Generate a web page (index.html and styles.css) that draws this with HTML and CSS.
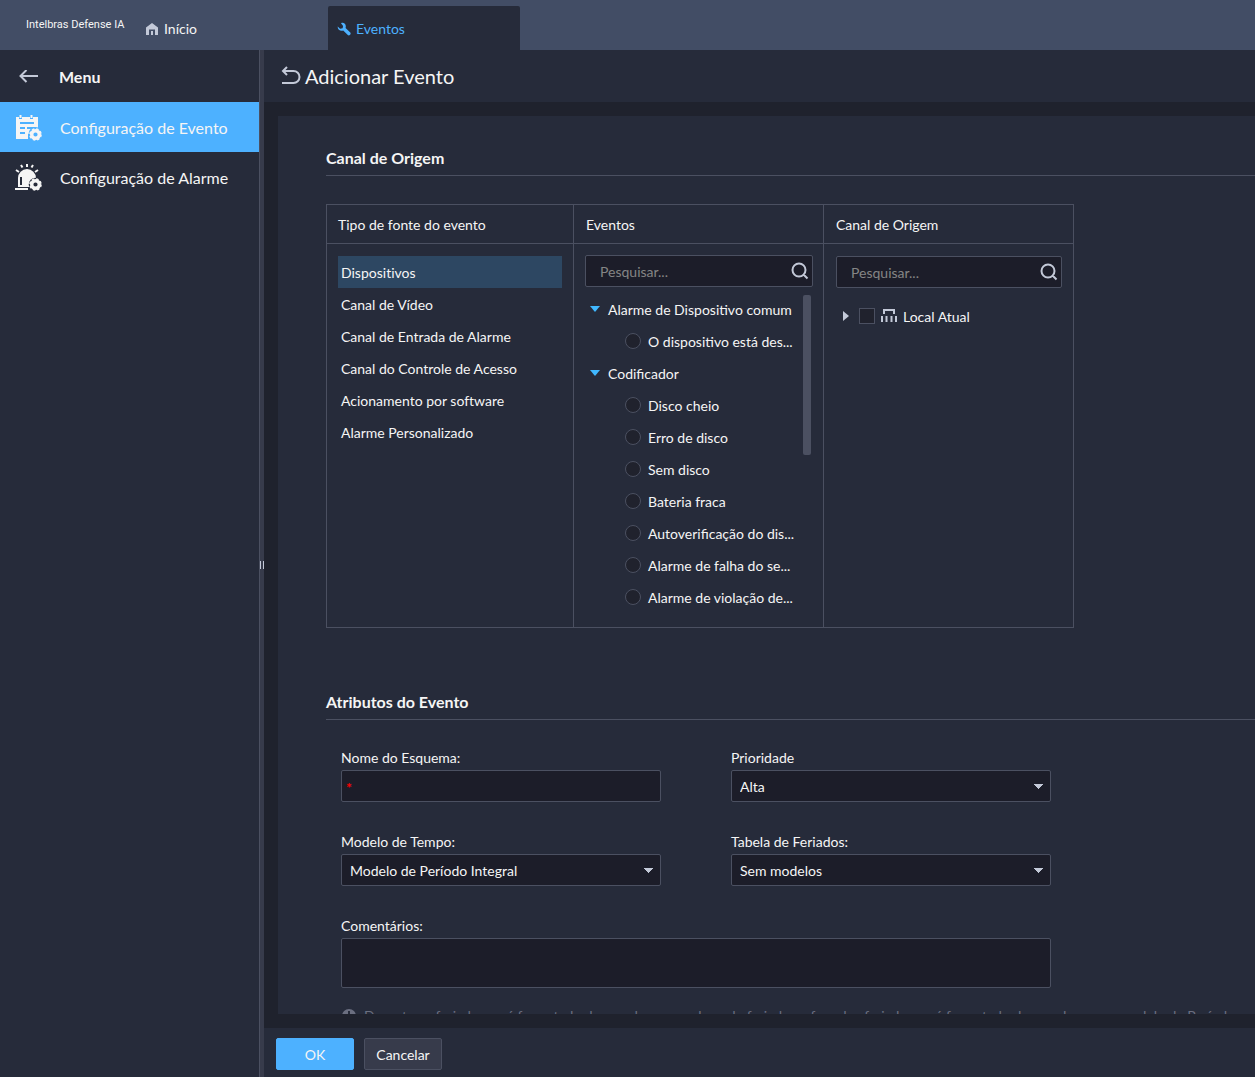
FILE: index.html
```
<!DOCTYPE html>
<html lang="pt-BR">

<head>
  <meta charset="UTF-8">
  <title>Intelbras Defense IA</title>
  <link rel="stylesheet" href="styles.css">
</head>

<body>
  <header class="topbar">
    <div class="brand">Intelbras Defense IA</div>
    <a class="tab" href="#inicio">
      <svg width="14" height="14" viewBox="0 0 14 14"><path fill="#c3c9d8" d="M7 1 13 5.500V13h-3V7.500H4V13H1V5.500zM6 9h2v4H6z"/></svg>
      Início
    </a>
    <a class="tab active" href="#eventos">
      <svg width="14" height="14" viewBox="0 0 14 14"><path fill="#4db1ff" d="M4 1.200C6-.2 9 1.500 8.800 4.500c0 .6-.1 1-.2 1.500l4.700 4.600c1.200 1.500-1 3.600-2.500 2.500L6.200 8.500C3.300 9.500.5 7.500.7 4.600l2.400 2.100 2.500-.4.500-2.400z"/></svg>
      Eventos
    </a>
  </header>

  <div class="wrap">
    <nav class="sidebar">
      <div class="menu_head">
        <button class="icon_btn" type="button" aria-label="Voltar">
          <svg width="20" height="14" viewBox="0 0 20 14"><path fill="none" stroke="#c3c9d8" stroke-width="2" d="M19 6H2M7.500 0 1.500 6l6 6"/></svg>
        </button>
        <span>Menu</span>
      </div>
      <a class="menu_item selected" href="#evento">
        <svg width="28" height="28" viewBox="0 0 28 28">
          <path fill="#f5f5f5" d="M1 3h3v2h3V3h8v2h3V3h5v22H1z"/>
          <path stroke="#f5f5f5" stroke-width="2" d="M5.500 1v3M16.500 1v3"/>
          <path stroke="#4db1ff" stroke-width="2" fill="none" d="M5 9h14M5 14h5M12 14h8M5 19h5"/>
          <circle cx="20.500" cy="20" r="7" fill="#4db1ff"/>
          <path fill="#4db1ff" d="M13 20h14v8H13z"/>
          <circle cx="20.500" cy="20.500" r="3.800" fill="none" stroke="#f5f5f5" stroke-width="3.400"/>
          <circle cx="20.500" cy="20.500" r="5.300" fill="none" stroke="#f5f5f5" stroke-width="2" stroke-dasharray="2.400 1.760"/>
        </svg>
        <span>Configuração de Evento</span>
      </a>
      <a class="menu_item" href="#alarme">
        <svg width="28" height="28" viewBox="0 0 28 28">
          <path fill="#f5f5f5" d="M3 23V14a9 9 0 0 1 18 0v1l-7 8zM0 24h13v2H0z"/>
          <path stroke="#262b3a" stroke-width="2" d="M6 13v8"/>
          <path stroke="#f5f5f5" stroke-width="2" d="M12 0v3M6 1l1.500 2.500M18 1l-1.500 2.500M1 6l3 2M23 6l-3 2"/>
          <circle cx="20.500" cy="20.500" r="6.800" fill="#262b3a"/>
          <circle cx="20.500" cy="20.500" r="3.800" fill="none" stroke="#f5f5f5" stroke-width="3.400"/>
          <circle cx="20.500" cy="20.500" r="5.300" fill="none" stroke="#f5f5f5" stroke-width="2" stroke-dasharray="2.400 1.760"/>
        </svg>
        <span>Configuração de Alarme</span>
      </a>
    </nav>
    <div class="splitter"><i></i></div>

    <main class="content">
      <div class="page_title">
        <button class="icon_btn" type="button" aria-label="Retornar">
          <svg width="20" height="20" viewBox="0 0 20 20"><path fill="none" stroke="#c3c9d8" stroke-width="2" d="M2 5h10.500a6 6 0 0 1 0 12H1M6 1 2 5l4 4"/></svg>
        </button>
        <h1>Adicionar Evento</h1>
      </div>

      <div class="panel_area">
        <div class="panel">
          <h2 class="section_title">Canal de Origem</h2>
          <div class="picker">
            <section class="picker_col source">
              <h3>Tipo de fonte do evento</h3>
              <ul class="type_list">
                <li class="selected">Dispositivos</li>
                <li>Canal de Vídeo</li>
                <li>Canal de Entrada de Alarme</li>
                <li>Canal do Controle de Acesso</li>
                <li>Acionamento por software</li>
                <li>Alarme Personalizado</li>
              </ul>
            </section>
            <section class="picker_col events">
              <h3>Eventos</h3>
              <div class="search">
                <input type="text" placeholder="Pesquisar..." aria-label="Pesquisar eventos">
                <svg width="18" height="18" viewBox="0 0 18 18"><path fill="none" stroke="#c3c9d8" stroke-width="2" d="M14.500 8a6.500 6.500 0 1 1-13 0 6.500 6.500 0 0 1 13 0zM12.500 12.500l4 4"/></svg>
              </div>
              <div class="event_scroll">
                <div class="tree">
                  <div class="tree_group"><i class="arrow_down"></i>Alarme de Dispositivo comum</div>
                  <label class="tree_item"><input type="radio" name="event">O dispositivo está des...</label>
                  <div class="tree_group"><i class="arrow_down"></i>Codificador</div>
                  <label class="tree_item"><input type="radio" name="event">Disco cheio</label>
                  <label class="tree_item"><input type="radio" name="event">Erro de disco</label>
                  <label class="tree_item"><input type="radio" name="event">Sem disco</label>
                  <label class="tree_item"><input type="radio" name="event">Bateria fraca</label>
                  <label class="tree_item"><input type="radio" name="event">Autoverificação do dis...</label>
                  <label class="tree_item"><input type="radio" name="event">Alarme de falha do se...</label>
                  <label class="tree_item"><input type="radio" name="event">Alarme de violação de...</label>
                </div>
                <div class="scroll_thumb"></div>
              </div>
            </section>
            <section class="picker_col channel">
              <h3>Canal de Origem</h3>
              <div class="search">
                <input type="text" placeholder="Pesquisar..." aria-label="Pesquisar canais">
                <svg width="18" height="18" viewBox="0 0 18 18"><path fill="none" stroke="#c3c9d8" stroke-width="2" d="M14.500 8a6.500 6.500 0 1 1-13 0 6.500 6.500 0 0 1 13 0zM12.500 12.500l4 4"/></svg>
              </div>
              <label class="site">
                <i class="arrow_right"></i>
                <input type="checkbox">
                <svg width="16" height="14" viewBox="0 0 16 14"><path fill="none" stroke="#c3c9d8" stroke-width="2" d="M3 5V1h10v4M1 7v6M5.500 7v6M10.500 7v6M15 7v6"/></svg>
                <span>Local Atual</span>
              </label>
            </section>
          </div>

          <h2 class="section_title">Atributos do Evento</h2>
          <form class="attributes">
            <div class="field">
              <label for="scheme">Nome do Esquema:</label>
              <input id="scheme" class="required" type="text" placeholder="*">
            </div>
            <div class="field">
              <label for="priority">Prioridade</label>
              <select id="priority"><option>Alta</option></select>
            </div>
            <div class="field">
              <label for="time_model">Modelo de Tempo:</label>
              <select id="time_model"><option>Modelo de Período Integral</option></select>
            </div>
            <div class="field">
              <label for="holidays">Tabela de Feriados:</label>
              <select id="holidays"><option>Sem modelos</option></select>
            </div>
            <div class="field wide">
              <label for="comments">Comentários:</label>
              <textarea id="comments"></textarea>
            </div>
          </form>
          <p class="hint">
            <svg width="14" height="14" viewBox="0 0 14 14"><circle cx="7" cy="7" r="7" fill="#6b6f80"/><path stroke="#262b3a" stroke-width="2" d="M7 2v6M7 9.500v2"/></svg>
            Durante os feriados será formatado de acordo com o plano de feriados e fora dos feriados será formatado de acordo com o modelo de Período
          </p>
        </div>
      </div>

      <footer class="actions">
        <button class="btn primary" type="button">OK</button>
        <button class="btn" type="button">Cancelar</button>
      </footer>
    </main>
  </div>
</body>

</html>
```
FILE: styles.css
```
* {
  box-sizing: border-box;
}

body {
  display: flex;
  flex-direction: column;
  height: 100vh;
  margin: 0;
  overflow: hidden;
  background: #262b3a;
  color: #f5f5f5;
  font: 14px/18px Lato, "Liberation Sans", sans-serif;
}

h1,
h2,
h3,
ul,
p {
  margin: 0;
  padding: 0;
}

a {
  color: inherit;
  text-decoration: none;
}

svg {
  display: block;
  flex: none;
}

input,
select,
textarea,
button {
  margin: 0;
  color: inherit;
  font: inherit;
}

/* top bar */
.topbar {
  display: flex;
  align-items: flex-end;
  flex: none;
  height: 50px;
  background: #424d65;
}

.brand {
  width: 136px;
  padding-left: 26px;
  font: 11px/50px Roboto, sans-serif;
  white-space: nowrap;
}

.tab {
  display: flex;
  align-items: center;
  gap: 5px;
  width: 192px;
  height: 44px;
  padding: 2px 9px 0;
  border-radius: 2px 2px 0 0;
}

.tab.active {
  background: #262b3a;
  color: #4db1ff;
}

/* side menu */
.wrap {
  display: flex;
  flex: 1;
  min-height: 0;
}

.sidebar {
  flex: none;
  width: 260px;
  border-right: 1px solid #4b5061;
  font-size: 16px;
}

.menu_head {
  display: flex;
  align-items: center;
  gap: 20px;
  height: 52px;
  padding: 2px 19px 0;
  font-weight: bold;
}

.icon_btn {
  padding: 0;
  border: 0;
  background: none;
  cursor: pointer;
}

.menu_item {
  display: flex;
  align-items: center;
  gap: 17px;
  height: 50px;
  padding: 2px 15px 0;
}

.menu_item.selected {
  background: #4db1ff;
}

.splitter {
  display: flex;
  align-items: center;
  flex: none;
  width: 4px;
  padding-top: 2px;
  background: #373b4b;
}

.splitter i {
  width: 4px;
  height: 8px;
  border: solid #c3c9d8;
  border-width: 0 1px;
}

/* content */
.content {
  display: flex;
  flex: 1;
  flex-direction: column;
  min-width: 0;
}

.page_title {
  display: flex;
  align-items: center;
  flex: none;
  gap: 4px;
  height: 52px;
  padding: 0 17px;
}

.page_title h1 {
  font-size: 20px;
  font-weight: normal;
  line-height: 24px;
}

.panel_area {
  display: flex;
  flex: 1;
  min-height: 0;
  padding: 14px 0 14px 14px;
  background: #1f222d;
}

.panel {
  flex: 1;
  min-width: 0;
  padding: 32px 0 0 48px;
  overflow: hidden;
  background: #262b3a;
}

.section_title {
  height: 28px;
  border-bottom: 1px solid #4b5061;
  font-size: 16px;
  line-height: 20px;
}

.picker {
  display: grid;
  grid-template-columns: 246fr 250fr 250fr;
  max-width: 748px;
  height: 424px;
  margin: 28px 0 64px;
  border: 1px solid #4b5061;
}

.picker_col {
  min-width: 0;
}

.picker_col + .picker_col {
  border-left: 1px solid #4b5061;
}

.picker_col h3 {
  height: 39px;
  padding: 0 12px;
  border-bottom: 1px solid #4b5061;
  font-size: 14px;
  font-weight: normal;
  line-height: 40px;
}

.picker_col.source h3 {
  padding: 0 11px;
}

.type_list {
  padding: 12px 11px;
  list-style: none;
  line-height: 34px;
  font-variant-ligatures: none;
}

.type_list li {
  height: 32px;
  padding: 0 3px;
}

.type_list .selected {
  background: #2d4762;
}

.search {
  position: relative;
  margin: 12px 11px 0 12px;
}

.events .search {
  margin: 11px 10px 0 11px;
}

.search input {
  width: 100%;
  height: 32px;
  padding: 0 34px 0 14px;
  border: 1px solid #4b5061;
  border-radius: 2px;
  background: #1c1d29;
}

.search input::placeholder {
  color: #858585;
}

.search svg {
  position: absolute;
  top: 7px;
  right: 4px;
}

/* event tree */
.event_scroll {
  position: relative;
  margin-top: 7px;
}

.tree {
  padding-top: 1px;
}

.tree_group,
.tree_item {
  display: flex;
  align-items: center;
  height: 32px;
  padding-bottom: 2px;
  white-space: nowrap;
}

.tree_group {
  gap: 8px;
  padding-left: 16px;
}

.tree_item {
  gap: 7px;
  padding-left: 51px;
}

.tree_group i,
.tree_item input {
  margin-bottom: 2px;
}

.arrow_down {
  border: 5px solid transparent;
  border-top: 6px solid #40b8ff;
  border-bottom: 0;
}

.arrow_right {
  border: 5px solid transparent;
  border-left: 6px solid #c3c9d8;
  border-right: 0;
}

input[type="radio"],
input[type="checkbox"] {
  width: 16px;
  height: 16px;
  border: 1px solid #4b5061;
  background: #20222d;
  appearance: none;
}

input[type="radio"] {
  border-radius: 50%;
}

.scroll_thumb {
  position: absolute;
  top: 1px;
  right: 12px;
  width: 8px;
  height: 160px;
  border-radius: 2px;
  background: #4b5061;
}

.site {
  display: flex;
  align-items: center;
  margin: 18px 0 0 19px;
}

.site input {
  margin: 0 6px 0 10px;
}

.site span {
  padding: 2px 0 0 6px;
}

/* form */
.attributes {
  display: grid;
  grid-template-columns: 320px 320px;
  gap: 28px 70px;
  margin: 26px 0 0 15px;
}

.field {
  display: flex;
  flex-direction: column;
}

.field.wide {
  grid-column: span 2;
}

.field label {
  line-height: 24px;
}

.field input,
.field select,
.field textarea {
  width: 100%;
  height: 32px;
  padding: 2px 8px 0;
  border: 1px solid #4b5061;
  border-radius: 2px;
  background: #1c1d29;
}

.field select {
  appearance: none;
  background: conic-gradient(from -45deg at 50% 100%, #c3c9d8 90deg, transparent 0) right 7px top 13px / 9px 5px no-repeat, #1c1d29;
}

.field textarea {
  height: 50px;
  resize: none;
}

.field .required {
  padding-left: 4px;
}

.required::placeholder {
  color: #f00;
  font-weight: bold;
}

.hint {
  display: flex;
  align-items: center;
  gap: 8px;
  margin: 16px 0 0 16px;
  color: #6b6f80;
  line-height: 24px;
  white-space: nowrap;
}

/* footer */
.actions {
  display: flex;
  align-items: center;
  flex: none;
  gap: 10px;
  height: 49px;
  padding: 3px 12px 0;
}

.btn {
  width: 78px;
  height: 32px;
  padding: 2px 0 0;
  border: 1px solid #4b5061;
  border-radius: 2px;
  background: #373b4b;
  cursor: pointer;
}

.btn.primary {
  border-color: #4db1ff;
  background: #4db1ff;
}
```
